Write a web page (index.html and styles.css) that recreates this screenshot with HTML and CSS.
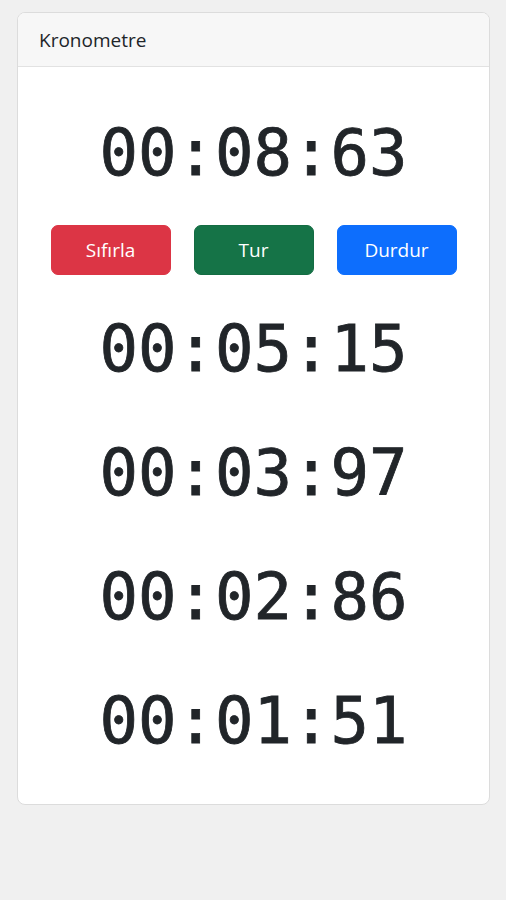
FILE: index.html
```html
<!DOCTYPE html>
<html lang="tr">
<head>
<meta charset="utf-8">
<title>Kronometre</title>
<link rel="stylesheet" href="styles.css">
</head>
<body>
<div class="page">
  <div class="card">
    <div class="card-header">Kronometre</div>
    <div class="card-body">
      <div class="timer main">00:08:63</div>
      <div class="actions">
        <button class="btn btn-red">Sıfırla</button>
        <button class="btn btn-green">Tur</button>
        <button class="btn btn-blue">Durdur</button>
      </div>
      <div class="laps">
        <div class="timer lap">00:05:15</div>
        <div class="timer lap">00:03:97</div>
        <div class="timer lap">00:02:86</div>
        <div class="timer lap">00:01:51</div>
      </div>
    </div>
  </div>
</div>
</body>
</html>
```

FILE: styles.css
```css
html, body {
  margin: 0;
  padding: 0;
  background: #f0f0f0;
}
body {
  font-family: "Open Sans", "Noto Sans", sans-serif;
  color: #212529;
}
.page {
  padding: 12px 16px 0 17px;
}
.card {
  background: #ffffff;
  border: 1px solid #dcdcdc;
  border-radius: 8px;
  height: 793px;
  box-sizing: border-box;
  overflow: hidden;
}
.card-header {
  background: #f7f7f7;
  border-bottom: 1px solid #e2e2e2;
  height: 54px;
  box-sizing: border-box;
  padding: 0 21px;
  display: flex;
  align-items: center;
  font-size: 19px;
  color: #212529;
}
.card-body {
  padding: 20px 20px 20px;
}
.timer {
  font-family: "DejaVu Sans Mono", monospace;
  font-size: 64px;
  text-align: center;
  color: #212529;
  -webkit-text-stroke: 0.8px #212529;
}
.main {
  line-height: 132px;
}
.actions {
  display: flex;
  justify-content: center;
  gap: 23px;
  margin-top: 6px;
}
.btn {
  width: 120px;
  height: 50px;
  border-radius: 7px;
  border: 1px solid transparent;
  color: #ffffff;
  font-family: "Open Sans", "Noto Sans", sans-serif;
  font-size: 19px;
  padding: 0;
}
.btn-red {
  background: #dc3545;
  border-color: #dc3545;
}
.btn-green {
  background: #157347;
  border-color: #146c43;
}
.btn-blue {
  background: #0d6efd;
  border-color: #0d6efd;
}
.laps {
  margin-top: 12px;
}
.lap {
  line-height: 124px;
}
```
